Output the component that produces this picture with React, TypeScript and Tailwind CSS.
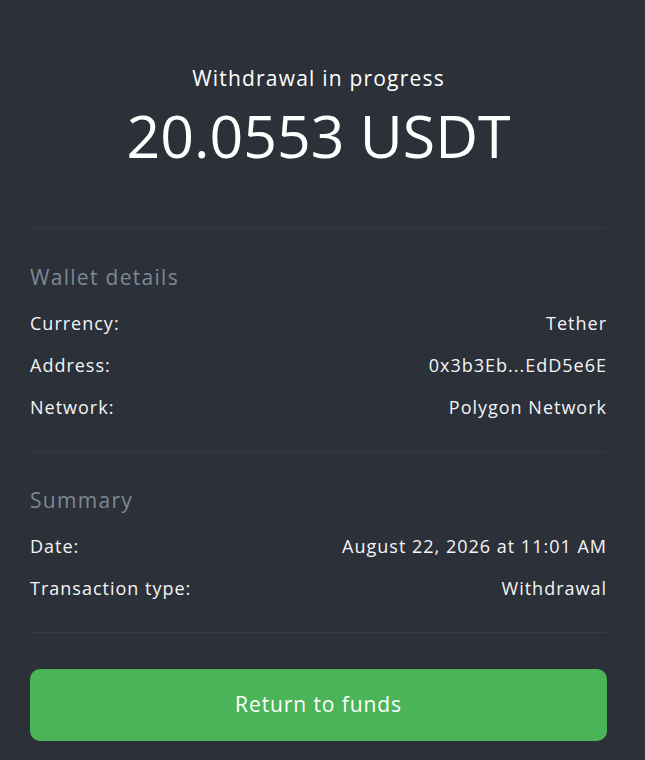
const WALLET = [
  { label: 'Currency:', value: 'Tether' },
  { label: 'Address:', value: '0x3b3Eb...EdD5e6E' },
  { label: 'Network:', value: 'Polygon Network' },
];

const SUMMARY = [
  { label: 'Date:', value: 'August 22, 2026 at 11:01 AM' },
  { label: 'Transaction type:', value: 'Withdrawal' },
];

function Section({ title, rows }: { title: string; rows: { label: string; value: string }[] }) {
  return (
    <div className="pt-[34px] pb-[23px] border-b border-[#363c46]">
      <div className="text-[21px] leading-[28px] tracking-[1.3px] text-[#7c8893] mb-[11px]">{title}</div>
      {rows.map((r) => (
        <div
          key={r.label}
          className="h-[42px] flex items-center justify-between text-[18px] tracking-[1px] font-medium text-[#f5f5f5]"
        >
          <span>{r.label}</span>
          <span>{r.value}</span>
        </div>
      ))}
    </div>
  );
}

export default function App() {
  return (
    <div
      className="w-[645px] h-[760px] bg-[#2b3039] pl-[30px] pr-[38px] overflow-hidden"
      style={{ fontFamily: '"Open Sans", sans-serif' }}
    >
      <div className="pt-[64px] pb-[61px] border-b border-[#363c46] text-center text-white">
        <div className="text-[21px] leading-[28px] tracking-[1.2px] mb-[11px]">Withdrawal in progress</div>
        <div className="text-[59px] leading-[64px]">20.0553 USDT</div>
      </div>
      <Section title="Wallet details" rows={WALLET} />
      <Section title="Summary" rows={SUMMARY} />
      <button className="mt-[36px] w-full h-[72px] rounded-[10px] bg-[#4bb459] text-white text-[21px] tracking-[0.9px]">
        Return to funds
      </button>
    </div>
  );
}
